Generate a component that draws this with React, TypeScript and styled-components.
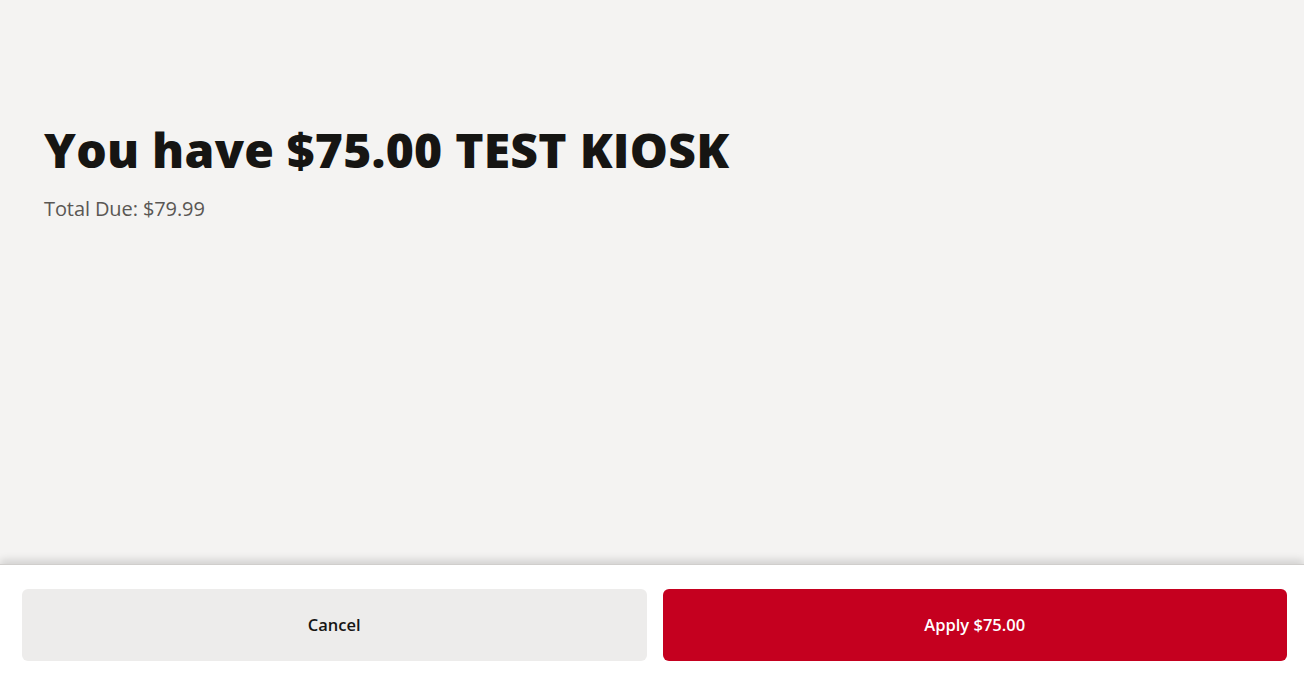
import React from "react";
import styled, { createGlobalStyle } from "styled-components";

const Global = createGlobalStyle`
  html, body { margin: 0; padding: 0; height: 100%; }
  body { font-family: "Open Sans", "Noto Sans", sans-serif; background: #f4f3f2; }
  #root { height: 100%; }
`;

const Page = styled.div`
  height: 679px;
  display: flex;
  flex-direction: column;
  background: #f4f3f2;
`;

const Main = styled.main`
  flex: 1;
  padding: 120px 44px 0;
`;

const Title = styled.h1`
  margin: 0;
  font-family: "Open Sans", sans-serif;
  font-weight: 800;
  font-size: 48px;
  line-height: 60px;
  letter-spacing: 0.25px;
  color: #161513;
`;

const Sub = styled.p`
  margin: 16px 0 0;
  font-size: 20px;
  line-height: 26px;
  color: #5a5754;
  letter-spacing: -0.1px;
`;

const Footer = styled.footer`
  height: 115px;
  box-sizing: border-box;
  background: #fff;
  padding: 24px 17px 0 22px;
  display: flex;
  gap: 16px;
  align-items: flex-start;
  box-shadow: 0 -4px 8px rgba(0, 0, 0, 0.14);
  border-top: 1px solid #d0cecc;
`;

const Button = styled.button<{ $primary?: boolean }>`
  flex: 1;
  height: 72px;
  padding: 0 0 2px;
  border: none;
  border-radius: 6px;
  background: ${(p) => (p.$primary ? "#c5001f" : "#edeceb")};
  color: ${(p) => (p.$primary ? "#fff" : "#161513")};
  font-family: "Open Sans", sans-serif;
  font-weight: 600;
  font-size: 16.5px;
  letter-spacing: 0;
  cursor: pointer;
`;

export default function App() {
  return (
    <>
      <Global />
      <Page>
        <Main>
          <Title>You have $75.00 TEST KIOSK</Title>
          <Sub>Total Due: $79.99</Sub>
        </Main>
        <Footer>
          <Button>Cancel</Button>
          <Button $primary>Apply $75.00</Button>
        </Footer>
      </Page>
    </>
  );
}
